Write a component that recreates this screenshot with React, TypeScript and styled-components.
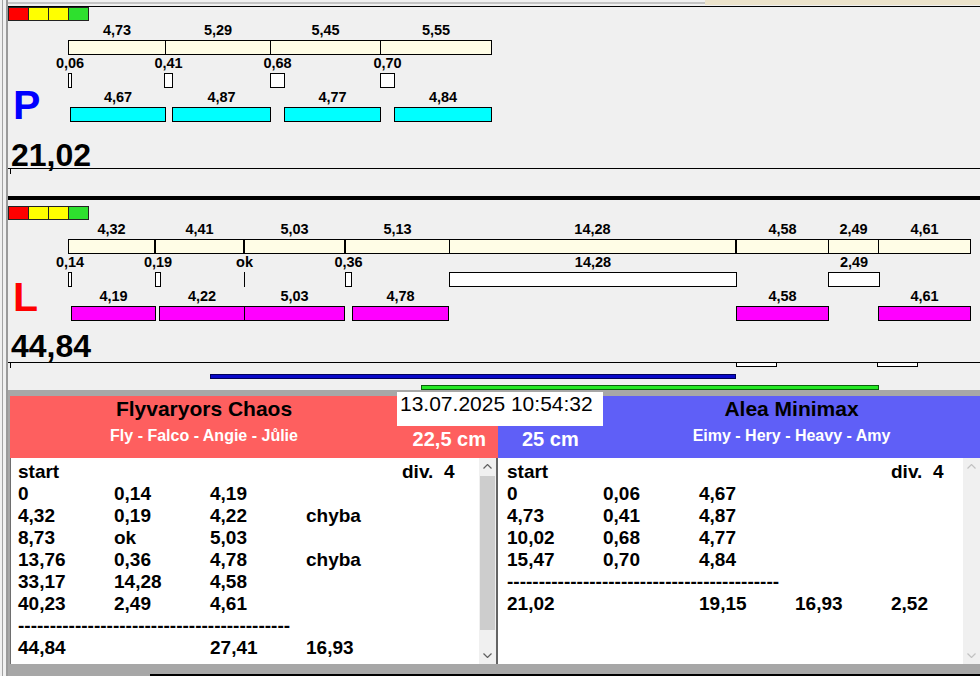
import React from "react";
import styled, { createGlobalStyle, css } from "styled-components";

// page x of the left edge of the chart canvases (after the window frame)
const X0 = 8;

type Seg = [number, number, string?];
type LaneKind = "gap" | "ahead" | "behind";

interface TrackData {
  letter: string;
  letterColor: string;
  total: string;
  runFill: string;
  border: number;
  height: number;
  shift: number;
  gaps: { indicator: number; letter: number; total: number; lane: number };
  splits: Seg[];
  pauses: Seg[];
  runs: Seg[];
  lane: { kind: LaneKind; from: number; to: number }[];
}

const tracks: TrackData[] = [
  {
    letter: "P",
    letterColor: "#0000ff",
    total: "21,02",
    runFill: "#00ffff",
    border: 1,
    height: 190,
    shift: 0,
    gaps: { indicator: 0, letter: 64, total: 17, lane: 0 },
    splits: [[68, 166, "4,73"], [165, 271, "5,29"], [270, 381, "5,45"], [380, 492, "5,55"]],
    pauses: [[68, 72, "0,06"], [164, 173, "0,41"], [270, 285, "0,68"], [380, 395, "0,70"]],
    runs: [[70, 166, "4,67"], [172, 271, "4,87"], [284, 381, "4,77"], [394, 492, "4,84"]],
    lane: [],
  },
  {
    letter: "L",
    letterColor: "#ff0000",
    total: "44,84",
    runFill: "#ff00ff",
    border: 4,
    height: 194,
    shift: 6,
    gaps: { indicator: 6, letter: 57, total: 16, lane: 3 },
    splits: [
      [68, 155, "4,32"], [155, 244, "4,41"], [244, 345, "5,03"], [345, 450, "5,13"],
      [449, 736, "14,28"], [736, 829, "4,58"], [828, 879, "2,49"], [878, 971, "4,61"],
    ],
    pauses: [
      [68, 72, "0,14"], [155, 161, "0,19"], [244, 245, "ok"], [345, 352, "0,36"],
      [449, 737, "14,28"], [828, 880, "2,49"],
    ],
    runs: [
      [71, 156, "4,19"], [159, 245, "4,22"], [244, 345, "5,03"], [352, 449, "4,78"],
      [736, 829, "4,58"], [878, 971, "4,61"],
    ],
    lane: [
      { kind: "gap", from: 736, to: 777 },
      { kind: "gap", from: 877, to: 918 },
      { kind: "ahead", from: 210, to: 736 },
      { kind: "behind", from: 421, to: 879 },
    ],
  },
];

const LAMPS = ["#ff0000", "#ffff00", "#ffff00", "#2ee02e"];
const LABEL_TOPS = [15.6, 49, 82.6];
const BAR_TOPS = [33, 66, 100];

const RULE = "-".repeat(43);

const leftRows: string[][] = [
  ["start", "", "", "", "div.  4"],
  ["0", "0,14", "4,19"],
  ["4,32", "0,19", "4,22", "chyba"],
  ["8,73", "ok", "5,03"],
  ["13,76", "0,36", "4,78", "chyba"],
  ["33,17", "14,28", "4,58"],
  ["40,23", "2,49", "4,61"],
  [RULE],
  ["44,84", "", "27,41", "16,93"],
];

const rightRows: string[][] = [
  ["start", "", "", "", "div.  4"],
  ["0", "0,06", "4,67"],
  ["4,73", "0,41", "4,87"],
  ["10,02", "0,68", "4,77"],
  ["15,47", "0,70", "4,84"],
  [RULE],
  ["21,02", "", "19,15", "16,93", "2,52"],
];

const GlobalStyle = createGlobalStyle`
  * { box-sizing: border-box; }
  html, body { margin: 0; padding: 0; background: #f0f0f0; }
  body { font-family: "Liberation Sans", Arial, sans-serif; overflow: hidden; }
`;

const Screen = styled.div`
  display: flex;
  width: 980px;
  height: 676px;
  overflow: hidden;
  background: #f0f0f0;
`;

const Frame = styled.div`
  flex: none;
  width: 8px;
  background: linear-gradient(
    to right,
    #f0f0f0 0 2px,
    #a3a3a3 2px 3px,
    #f0f0f0 3px 6px,
    #9a9a9a 6px 8px
  );
`;

const Main = styled.div`
  flex: 1;
  min-width: 0;
  display: flex;
  flex-direction: column;
`;

const TopStrip = styled.div`
  height: 6px;
  display: flex;
  padding-left: 697px;
  background: linear-gradient(#f0f0f0 0 2px, #c4c4c4 2px 4px, #f0f0f0 4px);
`;

const TopTab = styled.div`
  flex: 1;
  height: 5px;
  background: #ece3cb;
`;

const Track = styled.section<{ $border: number; $height: number }>`
  position: relative;
  height: ${(p) => p.$height}px;
  border-top: ${(p) => p.$border}px solid #000;
  display: flex;
  flex-direction: column;
  align-items: flex-start;
`;

const Indicator = styled.div<{ $top: number }>`
  display: flex;
  width: 81px;
  height: 14px;
  margin-top: ${(p) => p.$top}px;
  border: 1px solid #222;
`;

const Lamp = styled.span<{ $color: string }>`
  flex: 1;
  background: ${(p) => p.$color};
  & + & {
    border-left: 1px solid #222;
  }
`;

const TrackLetter = styled.div<{ $color: string; $gap: number }>`
  margin: ${(p) => p.$gap}px 0 0 5px;
  font-size: 41px;
  line-height: 40px;
  font-weight: 700;
  color: ${(p) => p.$color};
`;

const TrackTotal = styled.div<{ $gap: number }>`
  margin: ${(p) => p.$gap}px 0 0 3px;
  font-size: 32px;
  line-height: 26px;
  font-weight: 700;
  color: #000;
`;

const Lane = styled.div<{ $gap: number }>`
  position: relative;
  flex: 1;
  align-self: stretch;
  margin-top: ${(p) => p.$gap}px;
  border-top: 1px solid #000;
`;

const LaneTick = styled.span`
  position: absolute;
  left: 2px;
  top: 0;
  width: 1px;
  height: 5px;
  background: #000;
`;

const LaneMark = styled.span<{ $kind: LaneKind }>`
  position: absolute;
  height: 5px;
  ${(p) =>
    p.$kind === "gap"
      ? css`
          top: -1px;
          background: #fff;
          border: 1px solid #000;
        `
      : p.$kind === "ahead"
      ? css`
          top: 11px;
          background: #0808c8;
          border: 1px solid #00005a;
        `
      : css`
          top: 22px;
          background: #24e824;
          border: 1px solid #0b5f0b;
        `}
`;

const Chart = styled.div`
  position: absolute;
  inset: 0;
  pointer-events: none;
`;

const Bar = styled.div<{ $fill: string }>`
  position: absolute;
  height: 15px;
  border: 1px solid #000;
  background: ${(p) => p.$fill};
`;

const Tick = styled.div`
  position: absolute;
  width: 1px;
  height: 15px;
  background: #000;
`;

const BarLabel = styled.span`
  position: absolute;
  transform: translateX(-50%);
  font-size: 14.5px;
  line-height: 14px;
  font-weight: 700;
  color: #000;
  white-space: nowrap;
`;

const Bottom = styled.div`
  position: relative;
  height: 274px;
  padding: 6px 0 0 2px;
  background: #a7a7a7;
  display: grid;
  grid-template-columns: 488px 1fr;
`;

const Team = styled.div`
  display: flex;
  flex-direction: column;
  min-width: 0;
`;

const TeamHeader = styled.header<{ $bg: string; $cols: string }>`
  height: 62px;
  display: grid;
  grid-template-columns: ${(p) => p.$cols};
  background: ${(p) => p.$bg};
`;

const Names = styled.div`
  padding-top: 1px;
  text-align: center;
  white-space: nowrap;
`;

const TeamName = styled.div`
  font-size: 21px;
  line-height: 24px;
  font-weight: 700;
  color: #000;
`;

const Players = styled.div`
  margin-top: 6px;
  font-size: 16px;
  line-height: 18px;
  font-weight: 700;
  color: #fff;
`;

const Size = styled.div<{ $side: "left" | "right" }>`
  padding-top: 32px;
  font-size: 20px;
  line-height: 22px;
  font-weight: 700;
  color: #fff;
  white-space: nowrap;
  text-align: ${(p) => p.$side};
  ${(p) => (p.$side === "right" ? "padding-right: 12px;" : "padding-left: 24px;")}
`;

const ListBox = styled.div<{ $left: string; $right: string }>`
  flex: 1;
  min-height: 0;
  display: flex;
  background: #fff;
  border-left: ${(p) => p.$left};
  border-right: ${(p) => p.$right};
`;

const Lines = styled.div<{ $pad: number }>`
  flex: 1;
  min-width: 0;
  overflow: hidden;
  padding: 3px 0 0 ${(p) => p.$pad}px;
  font-size: 19px;
  line-height: 22px;
  font-weight: 700;
  color: #000;
`;

const Line = styled.div`
  display: grid;
  grid-template-columns: repeat(5, 96px);
  height: 22px;
  white-space: pre;
`;

const Rule = styled.span`
  grid-column: 1 / -1;
`;

const ScrollBar = styled.div`
  flex: none;
  width: 17px;
  display: flex;
  flex-direction: column;
  background: #f0f0f0;
`;

const ScrollButton = styled.div`
  height: 17px;
  display: flex;
  align-items: center;
  justify-content: center;
`;

const ScrollTrack = styled.div`
  flex: 1;
  padding: 1px;
`;

const ScrollThumb = styled.div`
  height: 154px;
  background: #cdcdcd;
`;

const Stamp = styled.div`
  position: absolute;
  top: 2px;
  left: 389px;
  width: 206px;
  height: 34px;
  padding-left: 3px;
  background: #fff;
  font-size: 21px;
  line-height: 24px;
  color: #000;
  white-space: nowrap;
`;

const Footer = styled.footer`
  height: 12px;
  display: flex;
  align-items: flex-end;
  background: #a7a7a7;
`;

const FooterEdge = styled.div`
  flex: 1;
  height: 2px;
  margin-left: 142px;
  background: #000;
`;

const Chevron = ({ up, color }: { up?: boolean; color: string }) => (
  <svg width="9" height="5" viewBox="0 0 9 5">
    <polyline
      points={up ? "0.5,4.5 4.5,0.5 8.5,4.5" : "0.5,0.5 4.5,4.5 8.5,0.5"}
      fill="none"
      stroke={color}
      strokeWidth="1.2"
    />
  </svg>
);

const ChartRow = ({ segs, fill, row, shift }: { segs: Seg[]; fill: string; row: number; shift: number }) => (
  <>
    {segs.map(([from, to, label], i) => {
      const barTop = BAR_TOPS[row] + shift;
      return (
        <React.Fragment key={i}>
          {label && (
            <BarLabel style={{ left: (from + to) / 2 - X0, top: LABEL_TOPS[row] + shift }}>{label}</BarLabel>
          )}
          {to - from <= 1 ? (
            <Tick style={{ left: from - X0, top: barTop }} />
          ) : (
            <Bar $fill={fill} style={{ left: from - X0, top: barTop, width: to - from }} />
          )}
        </React.Fragment>
      );
    })}
  </>
);

const TrackPanel = ({ t }: { t: TrackData }) => (
  <Track $border={t.border} $height={t.height}>
    <Indicator $top={t.gaps.indicator}>
      {LAMPS.map((c, i) => (
        <Lamp key={i} $color={c} />
      ))}
    </Indicator>
    <TrackLetter $color={t.letterColor} $gap={t.gaps.letter}>
      {t.letter}
    </TrackLetter>
    <TrackTotal $gap={t.gaps.total}>{t.total}</TrackTotal>
    <Lane $gap={t.gaps.lane}>
      <LaneTick />
      {t.lane.map((m, i) => (
        <LaneMark key={i} $kind={m.kind} style={{ left: m.from - X0, width: m.to - m.from }} />
      ))}
    </Lane>
    <Chart>
      <ChartRow segs={t.splits} fill="#fffde6" row={0} shift={t.shift} />
      <ChartRow segs={t.pauses} fill="#ffffff" row={1} shift={t.shift} />
      <ChartRow segs={t.runs} fill={t.runFill} row={2} shift={t.shift} />
    </Chart>
  </Track>
);

const ResultList = ({
  rows,
  pad,
  left,
  right,
  disabled,
}: {
  rows: string[][];
  pad: number;
  left: string;
  right: string;
  disabled?: boolean;
}) => {
  const arrow = disabled ? "#c2c2c2" : "#606060";
  return (
    <ListBox $left={left} $right={right}>
      <Lines $pad={pad}>
        {rows.map((r, i) => (
          <Line key={i}>
            {r[0] === RULE ? <Rule>{RULE}</Rule> : r.map((c, j) => <span key={j}>{c}</span>)}
          </Line>
        ))}
      </Lines>
      <ScrollBar>
        <ScrollButton>
          <Chevron up color={arrow} />
        </ScrollButton>
        <ScrollTrack>{!disabled && <ScrollThumb />}</ScrollTrack>
        <ScrollButton>
          <Chevron color={arrow} />
        </ScrollButton>
      </ScrollBar>
    </ListBox>
  );
};

export default function App() {
  return (
    <>
      <GlobalStyle />
      <Screen>
        <Frame />
        <Main>
          <TopStrip>
            <TopTab />
          </TopStrip>
          {tracks.map((t) => (
            <TrackPanel key={t.letter} t={t} />
          ))}
          <Bottom>
            <Team>
              <TeamHeader $bg="#fe5f5f" $cols="388px 1fr">
                <Names>
                  <TeamName>Flyvaryors Chaos</TeamName>
                  <Players>Fly - Falco - Angie - Jůlie</Players>
                </Names>
                <Size $side="right">22,5 cm</Size>
              </TeamHeader>
              <ResultList rows={leftRows} pad={7} left="1px solid #6e6e6e" right="2px solid #646464" />
            </Team>
            <Team>
              <TeamHeader $bg="#5f5ff7" $cols="105px 1fr">
                <Size $side="left">25 cm</Size>
                <Names>
                  <TeamName>Alea Minimax</TeamName>
                  <Players>Eimy - Hery - Heavy - Amy</Players>
                </Names>
              </TeamHeader>
              <ResultList rows={rightRows} pad={9} left="none" right="none" disabled />
            </Team>
            <Stamp>13.07.2025 10:54:32</Stamp>
          </Bottom>
          <Footer>
            <FooterEdge />
          </Footer>
        </Main>
      </Screen>
    </>
  );
}
